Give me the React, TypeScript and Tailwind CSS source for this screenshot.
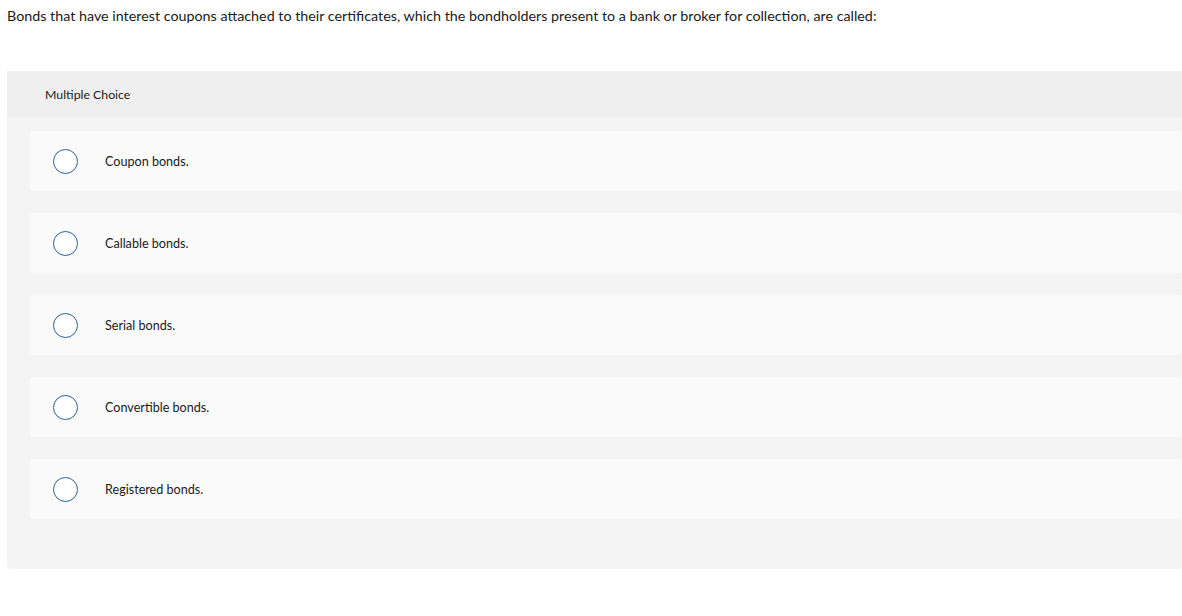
import React, { useState } from "react";

const choices: string[] = [
  "Coupon bonds.",
  "Callable bonds.",
  "Serial bonds.",
  "Convertible bonds.",
  "Registered bonds.",
];

const App: React.FC = () => {
  const [selected, setSelected] = useState<number | null>(null);

  return (
    <div className="min-h-screen bg-white font-['Lato',_'Liberation_Sans',_sans-serif] text-[#1a1a1a] overflow-hidden">
      <p className="pl-[7px] pt-[7px] text-[14.3px] leading-[18px]">
        Bonds that have interest coupons attached to their certificates, which
        the bondholders present to a bank or broker for collection, are called:
      </p>

      <div className="ml-[7px] mt-[46px] w-[1175px] rounded-b-[3px] bg-[#f4f4f4] pb-[50px]">
        <div className="flex h-[46px] items-center bg-[#efefef] pl-[38px] pt-[2px] text-[12.3px]">
          Multiple Choice
        </div>

        <div className="flex flex-col gap-[22px] pl-[23px] pt-[14px]">
          {choices.map((c, i) => (
            <label
              key={c}
              onClick={() => setSelected(i)}
              className="flex h-[60px] cursor-pointer items-center rounded-[3px] bg-[#fafafa] pl-[23px]"
            >
              <span className="flex h-[25px] w-[25px] items-center justify-center rounded-full border-[1.5px] border-[#2b5f9b] bg-white">
                {selected === i && (
                  <span className="h-[13px] w-[13px] rounded-full bg-[#2b5f9b]" />
                )}
              </span>
              <span className="ml-[27px] pt-[2px] text-[12.6px]">{c}</span>
            </label>
          ))}
        </div>
      </div>
    </div>
  );
};

export default App;
